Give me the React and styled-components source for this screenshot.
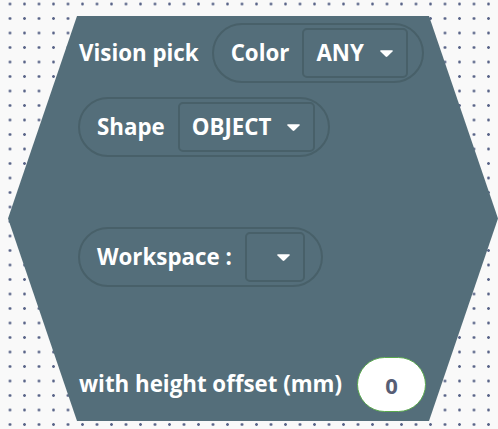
import React from "react";
import styled, { createGlobalStyle } from "styled-components";

const Global = createGlobalStyle`
  html, body { margin: 0; padding: 0; height: 100%; }
  body {
    background-color: #f9f9f9;
    background-image: radial-gradient(circle, #5a6589 1.1px, transparent 1.6px);
    background-size: 14.5px 14.5px;
    background-position: 2.75px -3.25px;
    font-family: "Open Sans", "Noto Sans", sans-serif;
    overflow: hidden;
  }
`;

const Block = styled.div`
  margin: 16px 0 0 8px;
  width: 490px;
  height: 405px;
  box-sizing: border-box;
  background: #546e7a;
  clip-path: polygon(69px 0, 421px 0, 100% 50%, 421px 100%, 69px 100%, 0 50%);
  padding: 7px 0 0 70px;
  display: flex;
  flex-direction: column;
  align-items: flex-start;
`;

const Row = styled.div`
  display: flex;
  align-items: center;
  gap: ${(p) => p.$gap || 13}px;
  margin-top: ${(p) => p.$top || 0}px;
`;

const Label = styled.span`
  color: #ffffff;
  font-weight: 700;
  font-size: 22.3px;
  line-height: 1;
  white-space: nowrap;
  padding-left: ${(p) => p.$indent || 0}px;
`;

const Pill = styled.div`
  display: inline-flex;
  align-items: center;
  box-sizing: border-box;
  height: 60px;
  border: 2px solid #486069;
  border-radius: 30px;
  padding: 0 ${(p) => p.$right || 14}px 0 17px;
  gap: 13px;
`;

const Dropdown = styled.div`
  display: flex;
  align-items: center;
  justify-content: flex-end;
  box-sizing: border-box;
  height: 50px;
  min-width: ${(p) => p.$min || 0}px;
  border: 2px solid #486069;
  border-radius: 5px;
  padding: 0 12px 0 12px;
  gap: 15px;
`;

const Value = styled(Label)``;

const Caret = () => (
  <svg width="15" height="9" viewBox="0 0 15 9">
    <path
      d="M2 1.2 H13 Q14.4 1.2 13.5 2.4 L8.4 7.6 Q7.5 8.5 6.6 7.6 L1.5 2.4 Q0.6 1.2 2 1.2 Z"
      fill="#ffffff"
    />
  </svg>
);

const NumberField = styled.div`
  box-sizing: border-box;
  width: 69px;
  height: 55px;
  background: #ffffff;
  border: 1.5px solid #5aa84e;
  border-radius: 28px;
  display: flex;
  align-items: center;
  justify-content: center;
  color: #575e75;
  font-weight: 700;
  font-size: 22px;
`;

export default function App() {
  return (
    <>
      <Global />
      <Block>
        <Row>
          <Label $indent={1}>Vision pick</Label>
          <Pill $right={14}>
            <Label>Color</Label>
            <Dropdown>
              <Value>ANY</Value>
              <Caret />
            </Dropdown>
          </Pill>
        </Row>
        <Row $top={14}>
          <Pill $right={13}>
            <Label>Shape</Label>
            <Dropdown>
              <Value>OBJECT</Value>
              <Caret />
            </Dropdown>
          </Pill>
        </Row>
        <Row $top={70}>
          <Pill $right={16}>
            <Label>Workspace :</Label>
            <Dropdown $min={60}>
              <Caret />
            </Dropdown>
          </Pill>
        </Row>
        <Row $top={70} $gap={15}>
          <Label $indent={1}>with height offset (mm)</Label>
          <NumberField>0</NumberField>
        </Row>
      </Block>
    </>
  );
}
